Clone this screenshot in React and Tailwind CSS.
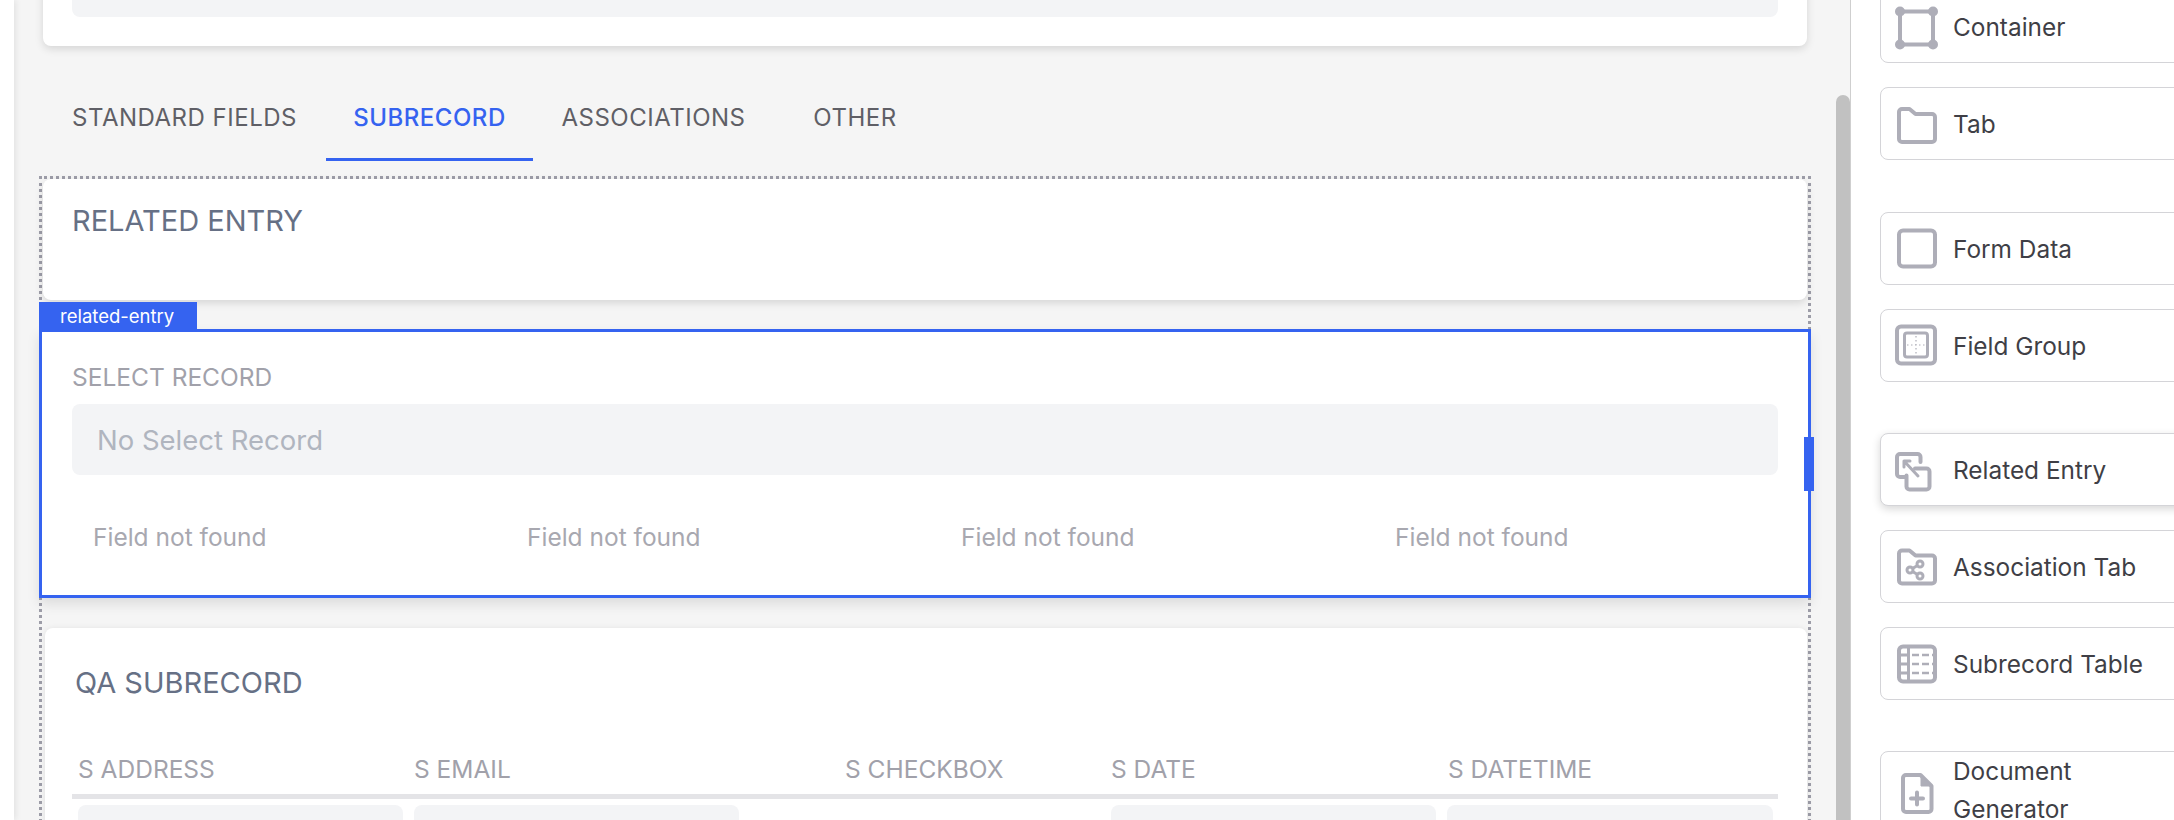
const G = "#aeaeb8";
const S = { fill: "none", stroke: G, strokeWidth: 4, strokeLinejoin: "round", strokeLinecap: "round" };

const Ic = ({ children }) => (
  <svg width="44" height="44" viewBox="0 0 44 44" className="shrink-0 overflow-visible">{children}</svg>
);

const icons = {
  container: (
    <Ic>
      <rect x="5" y="6.5" width="33" height="33" {...S} />
      {[[5, 6.5], [38, 6.5], [5, 39.5], [38, 39.5]].map(([x, y]) => (
        <circle key={x + "-" + y} cx={x} cy={y} r="5" fill={G} />
      ))}
    </Ic>
  ),
  tab: (
    <Ic>
      <path d="M4 10a3 3 0 0 1 3-3h7.500l6 5h16.500a3 3 0 0 1 3 3v22a3 3 0 0 1-3 3h-30a3 3 0 0 1-3-3z" {...S} />
    </Ic>
  ),
  form: (
    <Ic>
      <rect x="4" y="3.500" width="36" height="36" rx="4" {...S} />
    </Ic>
  ),
  group: (
    <Ic>
      <rect x="2" y="2.500" width="38" height="37" rx="4" {...S} />
      <rect x="9.500" y="9" width="23" height="24" rx="2.5" fill="none" stroke={G} strokeWidth="3" />
      <path d="M21 12v18M12 21h18" fill="none" stroke={G} strokeWidth="1.200" strokeDasharray="1.500 2.500" />
    </Ic>
  ),
  related: (
    <Ic>
      <path d="M25.500 14v-5a3 3 0 0 0-3-3h-17.500a3 3 0 0 0-3 3v17a3 3 0 0 0 3 3h5" {...S} />
      <path d="M20 20.500h11.500a3 3 0 0 1 3 3v15a3 3 0 0 1-3 3h-17a3 3 0 0 1-3-3v-11" {...S} />
      <path d="M23 28L9 13M9 13v6M9 13h6" {...S} strokeWidth="3" />
    </Ic>
  ),
  assoc: (
    <Ic>
      <path d="M4 8.500a3 3 0 0 1 3-3h7.500l6 5h16.500a3 3 0 0 1 3 3v22a3 3 0 0 1-3 3h-30a3 3 0 0 1-3-3z" {...S} />
      <path d="M15 25l10-6M15 25l10 6" fill="none" stroke={G} strokeWidth="3" />
      <circle cx="15" cy="25" r="3" fill="#fff" stroke={G} strokeWidth="3" />
      <circle cx="25" cy="19" r="3" fill="#fff" stroke={G} strokeWidth="3" />
      <circle cx="25" cy="31" r="3" fill="#fff" stroke={G} strokeWidth="3" />
    </Ic>
  ),
  table: (
    <Ic>
      <rect x="4" y="4.500" width="36" height="35" rx="4" {...S} />
      <path d="M13.500 4v36M3.500 13h10M3.500 22h10M3.500 31h10" {...S} strokeWidth="3" strokeLinecap="butt" />
      <path d="M17 13h23M17 22h23M17 31h23" fill="none" stroke={G} strokeWidth="2.500" strokeDasharray="7 3" />
    </Ic>
  ),
  doc: (
    <Ic>
      <path d="M8 10a3 3 0 0 1 3-3h14.500l11 11v23a3 3 0 0 1-3 3h-22.500a3 3 0 0 1-3-3z" {...S} />
      <path d="M26 7.500v10.500h10.500" fill={G} stroke={G} strokeWidth="1" strokeLinejoin="round" />
      <path d="M22 24.500v12M16 30.500h12" {...S} />
    </Ic>
  ),
};

const Widget = ({ icon, label, lift, className = "" }) => (
  <div className={`flex items-center w-[340px] min-h-[73px] bg-white border border-[#d4d4d8] rounded-lg pl-[14px] ${lift ? "shadow-[0_3px_8px_rgba(0,0,0,0.16)]" : ""} ${className}`}>
    {icons[icon]}
    <span className="ml-[14px] w-[190px] text-[24.4px] leading-[38px] text-[#3f3f46]">{label}</span>
  </div>
);

const Tab = ({ label, active, className = "" }) => (
  <div className={`h-[88px] pt-[5px] flex items-center justify-center border-b-[3px] text-[24px] tracking-[0.5px] ${active ? "border-[#3563f0] text-[#3563f0] font-medium" : "border-transparent text-[#5f5f66]"} ${className}`}>
    {label}
  </div>
);

const NotFound = ({ className = "w-[434px]" }) => (
  <div className={`pl-[21px] shrink-0 text-[24.5px] text-[#a8a8b0] ${className}`}>Field not found</div>
);

const Th = ({ children, className = "" }) => (
  <div className={`absolute top-0 text-[24.5px] leading-[30px] text-[#a1a1aa] ${className}`}>{children}</div>
);

export default function App() {
  return (
    <div className="w-[2174px] h-[820px] overflow-hidden flex bg-white font-['Inter',sans-serif]">
      <div className="w-[14px] shrink-0 bg-white z-10 shadow-[2px_0_6px_rgba(0,0,0,0.08)]" />

      <main className="relative w-[1836px] shrink-0 bg-[#f5f5f5] overflow-hidden pl-[25px] pr-[39px]">
        <div className="absolute right-0 top-[95px] bottom-0 w-[14px] rounded-t-full bg-[#c1c1c1]" />

        <section className="-mt-[40px] mx-[4px] h-[86px] bg-white rounded-b-lg shadow-[0_3px_8px_rgba(0,0,0,0.13)] pl-[29px] pr-[29px]">
          <div className="h-[57px] bg-[#f3f4f6] rounded-b-lg" />
        </section>

        <nav className="mt-[27px] ml-[4px] flex whitespace-nowrap">
          <Tab label="STANDARD FIELDS" className="w-[283px]" />
          <Tab label="SUBRECORD" active className="w-[207px]" />
          <Tab label="ASSOCIATIONS" className="w-[241px]" />
          <Tab label="OTHER" className="w-[136px] ml-[13px]" />
        </nav>

        <div className="mt-[15px] border-[3px] border-dotted border-[#9d9da8] h-[700px] px-[1px]">
          <section className="h-[121px] bg-white rounded-lg shadow-[0_3px_8px_rgba(0,0,0,0.13)] pl-[29px] pt-[25px]">
            <h2 className="text-[29px] leading-[34px] text-[#667085]">RELATED ENTRY</h2>
          </section>

          <section className="relative mt-[29px] -mx-[4px] h-[269px] border-[3px] border-[#3563f0] bg-white shadow-[0_6px_12px_rgba(0,0,0,0.1)] pl-[30px] pr-[30px] pt-[30px]">
            <div className="absolute -left-[3px] -top-[30px] w-[158px] h-[30px] bg-[#3563f0] text-white text-[18.5px] leading-[28px] pl-[21px]">
              related-entry
            </div>
            <div className="absolute -right-[6px] top-[105px] w-[10px] h-[54px] bg-[#3563f0]" />
            <div className="text-[24.5px] leading-[30px] text-[#a1a1aa]">SELECT RECORD</div>
            <div className="mt-[12px] h-[71px] pt-[2px] rounded-lg bg-[#f3f4f6] pl-[25px] flex items-center text-[27.5px] text-[#b0b5bf]">
              No Select Record
            </div>
            <div className="mt-[46px] flex leading-[32px]">
              <NotFound />
              <NotFound />
              <NotFound />
              <NotFound className="w-[270px]" />
            </div>
          </section>

          <section className="mt-[30px] ml-[2px] h-[300px] bg-white rounded-lg shadow-[0_1px_6px_rgba(0,0,0,0.1)] pl-[30px] pr-[29px] pt-[38px]">
            <h2 className="text-[29px] leading-[34px] text-[#667085]">QA SUBRECORD</h2>
            <div className="relative -ml-[1px] mt-[54px] h-[30px]">
              <Th className="left-[4px]">S ADDRESS</Th>
              <Th className="left-[340px]">S EMAIL</Th>
              <Th className="left-[771px]">S CHECKBOX</Th>
              <Th className="left-[1037px]">S DATE</Th>
              <Th className="left-[1374px]">S DATETIME</Th>
            </div>
            <div className="-ml-[3px] mt-[10px] h-[5px] bg-[#e4e4e7]" />
            <div className="-ml-[1px] mt-[6px] flex">
              <div className="ml-[4px] w-[325px] h-[60px] rounded-lg bg-[#f3f4f6]" />
              <div className="ml-[11px] w-[325px] h-[60px] rounded-lg bg-[#f3f4f6]" />
              <div className="ml-[372px] w-[325px] h-[60px] rounded-lg bg-[#f3f4f6]" />
              <div className="ml-[11px] w-[326px] h-[60px] rounded-lg bg-[#f3f4f6]" />
            </div>
          </section>
        </div>
      </main>

      <aside className="flex-1 min-w-0 overflow-hidden bg-white border-l border-[#cfcfcf] pl-[29px]">
        <div className="-mt-[10px] flex flex-col">
          <Widget icon="container" label="Container" />
          <Widget icon="tab" label="Tab" className="mt-[24px]" />
          <Widget icon="form" label="Form Data" className="mt-[52px]" />
          <Widget icon="group" label="Field Group" className="mt-[24px]" />
          <Widget icon="related" label="Related Entry" lift className="mt-[51px]" />
          <Widget icon="assoc" label="Association Tab" className="mt-[24px]" />
          <Widget icon="table" label="Subrecord Table" className="mt-[24px]" />
          <Widget icon="doc" label="Document Generator" className="mt-[51px]" />
        </div>
      </aside>
    </div>
  );
}
